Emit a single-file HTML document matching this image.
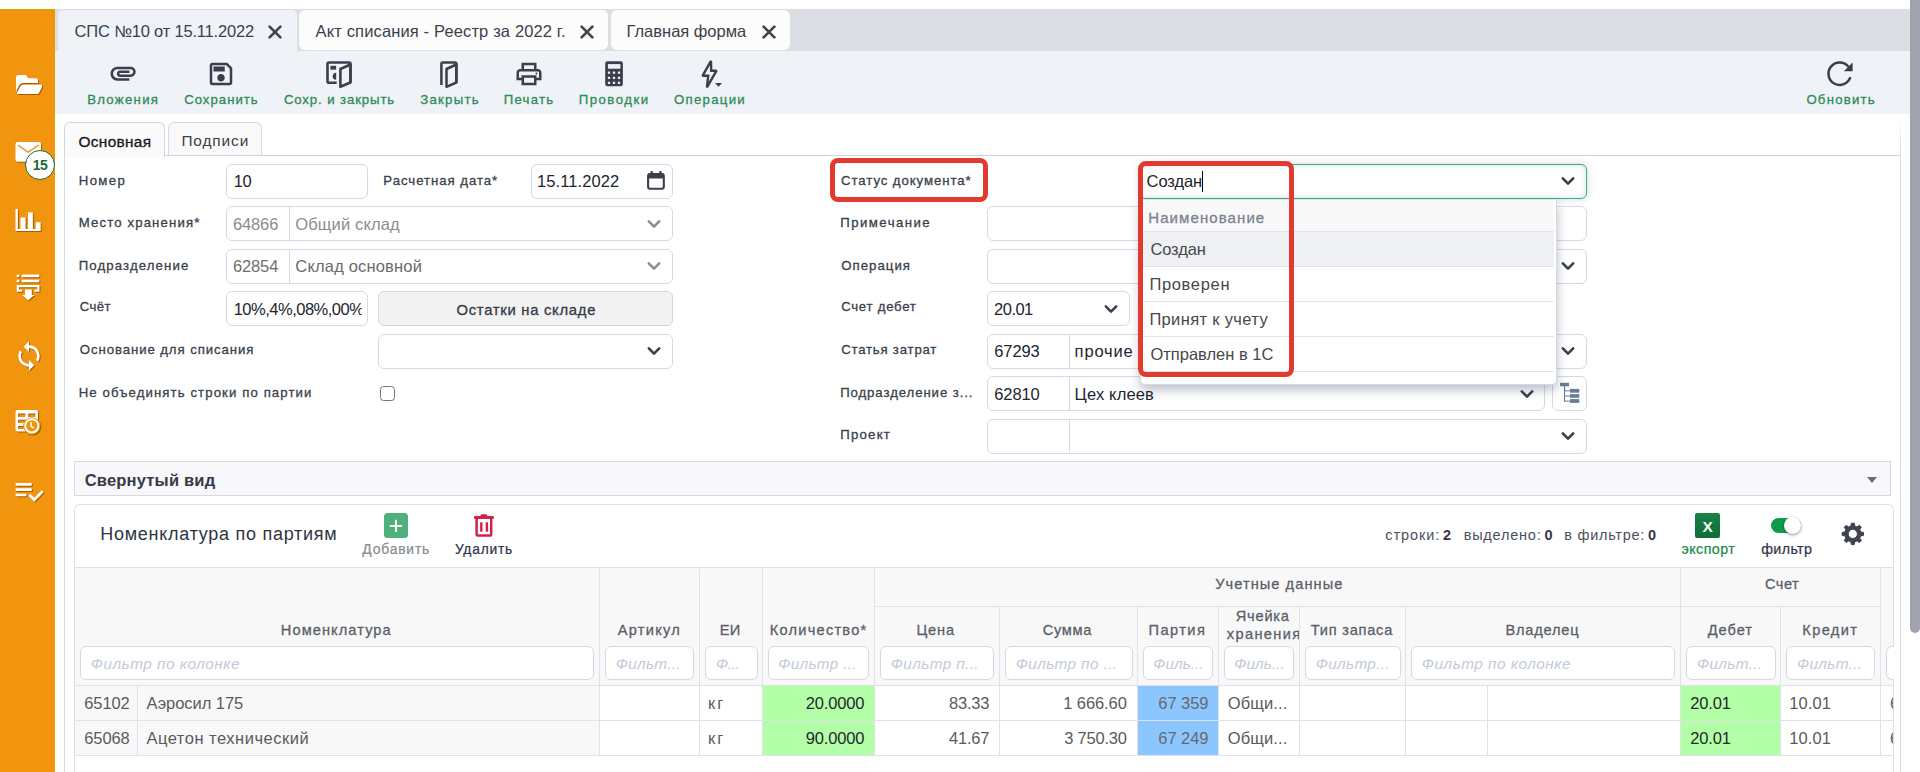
<!DOCTYPE html>
<html lang="ru">
<head>
<meta charset="utf-8">
<title>СПС №10 от 15.11.2022</title>
<style>
*{box-sizing:border-box;margin:0;padding:0}
html,body{width:1920px;height:772px;overflow:hidden;background:#fff}
body{font-family:"Liberation Sans",sans-serif;color:#343a40;position:relative;font-size:14px}
.a{position:absolute}
.t{position:absolute;white-space:nowrap}
.inp{position:absolute;height:35px;border:1px solid #d7d8e6;border-radius:6px;background:#fff}
.dv{position:absolute;width:1px;background:#d7d8e6}
.hl{position:absolute;height:1px;background:#e1e1ea}
.vl{position:absolute;width:1px;background:#e1e1ea}
.fi{position:absolute;top:646px;height:34px;border:1px solid #d7d8e6;border-radius:6px;background:#fff}
</style>
</head>
<body>
<div class="a" style="left:0px;top:9px;width:55px;height:763px;background:#f0950d"></div>
<div class="a" style="left:55px;top:9px;width:1855px;height:42px;background:#dbdee3"></div>
<div class="a" style="left:55px;top:51px;width:1855px;height:63px;background:#eff2f7"></div>
<div class="a" style="left:1910px;top:0px;width:10px;height:633px;background:#a0a2ae;border-radius:0 0 5px 5px"></div>
<div class="a" style="left:58px;top:10px;width:239px;height:41px;background:#eff2f7;border-radius:5px 5px 0 0"></div>
<div class="a" style="left:299px;top:10px;width:309px;height:40px;background:#fcfcfd;border-radius:6px"></div>
<div class="a" style="left:611px;top:10px;width:179px;height:40px;background:#fcfcfd;border-radius:6px"></div>
<div class="a" style="left:64px;top:155px;width:1837px;height:620px;border:1px solid #d6dae7;border-top-color:#c9d3e3;border-bottom:none"></div>
<div class="a" style="left:64px;top:122px;width:101px;height:35px;border:1px solid #cdd5e3;border-bottom:none;border-radius:6px 6px 0 0;background:#fafafb"></div>
<div class="a" style="left:168px;top:122px;width:94px;height:33px;border:1px solid #d6dae8;border-bottom:none;border-radius:6px 6px 0 0;background:#f9f9fa"></div>
<div class="a" style="left:1900px;top:118px;width:1px;height:37px;background:linear-gradient(rgba(214,218,231,0),#d6dae7)"></div>
<div class="inp" style="left:226px;top:164px;width:142px;"></div>
<div class="inp" style="left:531px;top:164px;width:142px;"></div>
<div class="inp" style="left:226px;top:206px;width:447px;"></div>
<div class="dv" style="left:289px;top:207px;height:33px"></div>
<div class="inp" style="left:226px;top:249px;width:447px;"></div>
<div class="dv" style="left:289px;top:250px;height:33px"></div>
<div class="inp" style="left:226px;top:291px;width:142px;overflow:hidden"></div>
<div class="inp" style="left:378px;top:291px;width:295px;background:#f2f2f3;border-color:#d4d4dc"></div>
<div class="inp" style="left:378px;top:334px;width:295px;"></div>
<div class="a" style="left:380px;top:385.6px;width:15px;height:15px;border:1.3px solid #767676;border-radius:3.5px;background:#fff"></div>
<div class="inp" style="left:1139px;top:164px;width:448px;border-color:#3cb371;box-shadow:0 0 7px rgba(110,130,190,.35),inset 0 0 6px rgba(120,140,195,.28)"></div>
<div class="a" style="left:1202px;top:170.5px;width:1px;height:21.5px;background:#000"></div>
<div class="inp" style="left:987px;top:206px;width:600px;"></div>
<div class="inp" style="left:987px;top:249px;width:600px;"></div>
<div class="inp" style="left:987px;top:291px;width:143px;"></div>
<div class="inp" style="left:987px;top:334px;width:600px;"></div>
<div class="dv" style="left:1069px;top:335px;height:33px"></div>
<div class="inp" style="left:987px;top:376px;width:558px;"></div>
<div class="dv" style="left:1069px;top:377px;height:33px"></div>
<div class="inp" style="left:1552px;top:376px;width:35px;"></div>
<div class="inp" style="left:987px;top:419px;width:600px;"></div>
<div class="dv" style="left:1069px;top:420px;height:33px"></div>
<div class="a" style="left:74px;top:461px;width:1817px;height:35px;background:#f8f8fa;border:1px solid #d6d8e6"></div>
<div class="a" style="left:1866.8px;top:476.5px;width:0px;height:0px;border-left:5.85px solid transparent;border-right:5.85px solid transparent;border-top:6.4px solid #6b6e75"></div>
<div class="a" style="left:74px;top:504px;width:1820px;height:280px;border:1px solid #dcdfea;border-radius:6px;background:#fff"></div>
<div class="a" style="left:75px;top:568px;width:1818px;height:118px;background:#f8f8f9"></div>
<div class="a" style="left:75px;top:686px;width:524px;height:70px;background:#f8f8f9"></div>
<div class="hl" style="left:75px;top:567px;width:1818px"></div><div class="hl" style="left:75px;top:685px;width:1818px"></div><div class="hl" style="left:874px;top:606px;width:1007px"></div><div class="hl" style="left:75px;top:720px;width:1818px"></div><div class="hl" style="left:75px;top:755px;width:1818px"></div>
<div class="a" style="left:763px;top:686px;width:111px;height:34px;background:#b3ffa8"></div>
<div class="a" style="left:1138px;top:686px;width:80px;height:34px;background:#8cc6ff"></div>
<div class="a" style="left:1681px;top:686px;width:99px;height:34px;background:#b3ffa8"></div>
<div class="a" style="left:763px;top:721px;width:111px;height:34px;background:#b3ffa8"></div>
<div class="a" style="left:1138px;top:721px;width:80px;height:34px;background:#8cc6ff"></div>
<div class="a" style="left:1681px;top:721px;width:99px;height:34px;background:#b3ffa8"></div>
<div class="vl" style="left:599px;top:569px;height:187px"></div>
<div class="vl" style="left:699px;top:569px;height:187px"></div>
<div class="vl" style="left:762px;top:569px;height:187px"></div>
<div class="vl" style="left:874px;top:569px;height:187px"></div>
<div class="vl" style="left:1680px;top:569px;height:187px"></div>
<div class="vl" style="left:1880px;top:569px;height:187px"></div>
<div class="vl" style="left:999px;top:607px;height:149px"></div>
<div class="vl" style="left:1137px;top:607px;height:149px"></div>
<div class="vl" style="left:1218px;top:607px;height:149px"></div>
<div class="vl" style="left:1299px;top:607px;height:149px"></div>
<div class="vl" style="left:1405px;top:607px;height:149px"></div>
<div class="vl" style="left:1780px;top:607px;height:149px"></div>
<div class="vl" style="left:137px;top:686px;height:70px"></div><div class="vl" style="left:1487px;top:686px;height:70px"></div>
<div class="a" style="left:1219px;top:625px;width:80px;height:20px;overflow:hidden"></div>
<div class="fi" style="left:80.3px;width:514px"></div>
<div class="fi" style="left:605px;width:89.3px"></div>
<div class="fi" style="left:705px;width:52.7px"></div>
<div class="fi" style="left:768.2px;width:101.1px"></div>
<div class="fi" style="left:880px;width:114.3px"></div>
<div class="fi" style="left:1005px;width:127.7px"></div>
<div class="fi" style="left:1143.3px;width:70px"></div>
<div class="fi" style="left:1224px;width:70.3px"></div>
<div class="fi" style="left:1305px;width:95.7px"></div>
<div class="fi" style="left:1411.2px;width:264.2px"></div>
<div class="fi" style="left:1686px;width:89.6px"></div>
<div class="fi" style="left:1786.2px;width:89.2px"></div>
<div class="fi" style="left:1886.3px;border-right:none;border-radius:6px 0 0 6px;width:8px"></div>
<svg class="a" style="left:15.5px;top:74.6px;filter:drop-shadow(1px 1px .6px rgba(140,70,0,.75))" width="26.6" height="19.4" viewBox="0 64 576 384" preserveAspectRatio="none"><path fill="#fff" d="M572.694 292.093L500.27 416.248A63.997 63.997 0 0 1 444.989 448H45.025c-18.523 0-30.064-20.093-20.731-36.093l72.424-124.155A64 64 0 0 1 152 256h399.964c18.523 0 30.064 20.093 20.73 36.093zM152 224h328v-48c0-26.51-21.49-48-48-48H272l-64-64H48C21.49 64 0 85.49 0 112v278.046l69.077-118.418C86.214 242.25 117.989 224 152 224z"/></svg>
<svg class="a" style="left:12px;top:138px;filter:drop-shadow(1px 1px .6px rgba(140,70,0,.75))" width="34" height="28" viewBox="12 138 34 28"><rect x="15.5" y="142" width="25.6" height="19.8" rx="2.2" fill="#fff"/><path d="M17.9 145.1L28.2 152L38.6 145.1" fill="none" stroke="#e39a3a" stroke-width="1.5"/></svg>
<div class="a" style="left:25px;top:150px;width:30px;height:30px;border-radius:50%;background:#fff;border:1.5px solid #1d6b1f"></div>
<svg class="a" style="left:12px;top:204px;filter:drop-shadow(1px 1px .6px rgba(140,70,0,.75))" width="34" height="32" viewBox="12 204 34 32"><path fill="#fff" d="M15.5 209h2.4v20h2.6v-11.5h5.1V229h2.4v-16.5h4.9V229h2.9v-6.7h4.9v8.7H15.5z"/></svg>
<svg class="a" style="left:12px;top:270px;filter:drop-shadow(1px 1px .6px rgba(140,70,0,.75))" width="34" height="36" viewBox="12 270 34 36"><g fill="#fff"><rect x="16.7" y="274.6" width="2.7" height="2.6"/><rect x="21.7" y="274.6" width="17.6" height="2.6"/><rect x="16.7" y="279.7" width="2.7" height="2.6"/><rect x="21.7" y="279.7" width="17.6" height="2.6"/><path d="M16.7 284.9h22.8v6.8h-5v-2.2h2.7v-2.3H19v2.3h3.2v2.2h-5.5z"/><path d="M25 289.5h6.8v5.5h2.6l-6.1 5.2-6.1-5.2H25z"/></g></svg>
<svg class="a" style="left:12.5px;top:340px;filter:drop-shadow(1px 1px .6px rgba(140,70,0,.75))" width="32" height="32" viewBox="0 0 24 24"><path fill="#fff" d="M12 4V1L8 5l4 4V6c3.31 0 6 2.69 6 6 0 1.01-.25 1.97-.7 2.8l1.46 1.46C19.54 15.03 20 13.57 20 12c0-4.42-3.58-8-8-8zm0 14c-3.31 0-6-2.69-6-6 0-1.01.25-1.97.7-2.8L5.24 7.74C4.46 8.97 4 10.43 4 12c0 4.42 3.58 8 8 8v3l4-4-4-4v3z"/></svg>
<svg class="a" style="left:12px;top:405px;filter:drop-shadow(1px 1px .6px rgba(140,70,0,.75))" width="34" height="34" viewBox="12 405 34 34"><g><path fill="#fff" fill-rule="evenodd" d="M17.5 409.9h18.5a2 2 0 0 1 2 2v17.7a2 2 0 0 1-2 2H17.5a2 2 0 0 1-2-2v-17.7a2 2 0 0 1 2-2zM18.2 413.4h7.2v3.5h-7.2zM28.3 413.4h7.2v3.5h-7.2zM18.2 419.8h7.2v3.3h-7.2zM18.2 426h7.2v3h-7.2z"/><circle cx="31.8" cy="425.8" r="8.6" fill="#f0950d"/><circle cx="31.8" cy="425.8" r="6.6" fill="none" stroke="#fff" stroke-width="2"/><path d="M31 422v4.2l2.8 2" fill="none" stroke="#fff" stroke-width="1.5"/></g></svg>
<svg class="a" style="left:12.8px;top:474.7px;filter:drop-shadow(1px 1px .6px rgba(140,70,0,.75))" width="32" height="32" viewBox="0 0 24 24"><path fill="#fff" d="M14 10H2v2h12v-2zm0-4H2v2h12V6zM2 16h8v-2H2v2zm19.5-4.5L23 13l-6.99 7-4.51-4.5L13 14l3.01 3 5.49-5.5z"/></svg>
<svg class="a" style="left:107.9px;top:57.5px;" width="30.24" height="30.24" viewBox="0 0 24 24"><path fill="#3b3f4c" d="M2 12.5C2 9.46 4.46 7 7.5 7H18c2.21 0 4 1.79 4 4s-1.79 4-4 4H9.5C8.12 15 7 13.88 7 12.5S8.12 10 9.5 10H17v2H9.41c-.55 0-.55 1 0 1H18c1.1 0 2-.9 2-2s-.9-2-2-2H7.5C5.57 9 4 10.57 4 12.5S5.57 16 7.5 16H17v2H7.5C4.46 18 2 15.54 2 12.5z"/></svg>
<svg class="a" style="left:206.1px;top:59.1px;" width="30" height="30" viewBox="0 0 24 24"><path fill="#3b3f4c" d="M17 3H5c-1.11 0-2 .9-2 2v14c0 1.1.89 2 2 2h14c1.1 0 2-.9 2-2V7l-4-4zm2 16H5V5h11.17L19 7.83V19zm-7-7c-1.66 0-3 1.34-3 3s1.34 3 3 3 3-1.34 3-3-1.34-3-3-3zM6 6h9v4H6z"/></svg>
<svg class="a" style="left:322px;top:56px;" width="36" height="36" viewBox="322 56 36 36"><g fill="none" stroke="#3b3f4c" stroke-width="2.6" stroke-linejoin="round"><path d="M336.7 82.8H329a1.5 1.5 0 0 1-1.5-1.5V64a1.5 1.5 0 0 1 1.5-1.5h20a1.5 1.5 0 0 1 1.5 1.5V82.6"/><path d="M340.4 69l10-4.5v18l-10 4.3z"/></g><rect x="330.4" y="65.8" width="5.7" height="3.9" fill="#3b3f4c"/><path d="M336.2 72.8a3.5 3.5 0 0 0 0 7z" fill="#3b3f4c"/></svg>
<svg class="a" style="left:434px;top:56px;" width="30" height="36" viewBox="434 56 30 36"><g fill="none" stroke="#3b3f4c" stroke-width="2.5" stroke-linejoin="round"><path d="M441.4 85V64a1.5 1.5 0 0 1 1.5-1.5h12a1.5 1.5 0 0 1 1.5 1.5V82.6"/><path d="M446.5 69l9.8-4.5v18l-9.8 4.3z"/></g></svg>
<svg class="a" style="left:513.75px;top:59px;" width="30" height="30" viewBox="0 0 24 24"><path fill="#3b3f4c" d="M19 8h-1V3H6v5H5c-1.66 0-3 1.34-3 3v6h4v4h12v-4h4v-6c0-1.66-1.34-3-3-3zM8 5h8v3H8V5zm8 12v2H8v-4h8v2zm2-2v-2H6v2H4v-4c0-.55.45-1 1-1h14c.55 0 1 .45 1 1v4h-2z"/><circle cx="18" cy="11.5" r=".8" fill="#3b3f4c"/></svg>
<svg class="a" style="left:603px;top:59px;" width="24" height="30" viewBox="603 59 24 30"><rect x="605.2" y="61.3" width="17.7" height="25" rx="2.2" fill="#3b3f4c"/><rect x="607.9" y="64.1" width="12.5" height="4.6" fill="#eff2f7"/><rect x="607.85" y="71.55" width="2.3" height="2.3" rx=".4" fill="#eff2f7"/><rect x="607.85" y="76.64999999999999" width="2.3" height="2.3" rx=".4" fill="#eff2f7"/><rect x="607.85" y="81.64999999999999" width="2.3" height="2.3" rx=".4" fill="#eff2f7"/><rect x="612.85" y="71.55" width="2.3" height="2.3" rx=".4" fill="#eff2f7"/><rect x="612.85" y="76.64999999999999" width="2.3" height="2.3" rx=".4" fill="#eff2f7"/><rect x="612.85" y="81.64999999999999" width="2.3" height="2.3" rx=".4" fill="#eff2f7"/><rect x="617.85" y="71.55" width="2.3" height="2.3" rx=".4" fill="#eff2f7"/><rect x="617.85" y="76.64999999999999" width="2.3" height="2.3" rx=".4" fill="#eff2f7"/><rect x="617.85" y="81.64999999999999" width="2.3" height="2.3" rx=".4" fill="#eff2f7"/></svg>
<svg class="a" style="left:698px;top:56px;" width="28" height="36" viewBox="698 56 28 36"><path d="M711 60.9L702.5 75.8H708.2L706.9 87.3L716.6 70.7H711.2Z" fill="none" stroke="#3b3f4c" stroke-width="2.4" stroke-linejoin="miter" stroke-miterlimit="1.6"/><path d="M715 83h7l-3.5 3.8z" fill="#3b3f4c"/></svg>
<svg class="a" style="left:1824px;top:58px;" width="34" height="32" viewBox="1824 58 34 32"><path d="M1848.53 66.85A11.2 11.2 0 1 0 1850.35 77.21" fill="none" stroke="#3b3f4c" stroke-width="2.5"/><path d="M1852.6 62.6V71.2H1843.8z" fill="#3b3f4c"/></svg>
<svg class="a" style="left:267.4px;top:24.3px;" width="16" height="16" viewBox="-8 -8 16 16"><path d="M-5.4 -5.4L5.4 5.4M5.4 -5.4L-5.4 5.4" stroke="#3f444f" stroke-width="2.7" stroke-linecap="round"/></svg>
<svg class="a" style="left:578.5px;top:24.3px;" width="16" height="16" viewBox="-8 -8 16 16"><path d="M-5.4 -5.4L5.4 5.4M5.4 -5.4L-5.4 5.4" stroke="#3f444f" stroke-width="2.7" stroke-linecap="round"/></svg>
<svg class="a" style="left:760.5px;top:24.3px;" width="16" height="16" viewBox="-8 -8 16 16"><path d="M-5.4 -5.4L5.4 5.4M5.4 -5.4L-5.4 5.4" stroke="#3f444f" stroke-width="2.7" stroke-linecap="round"/></svg>
<svg class="a" style="left:646px;top:217.8px;" width="16" height="12" viewBox="-8 -6 16 12"><path d="M-5.2 -2.6L0 2.6L5.2 -2.6" fill="none" stroke="#8a8d96" stroke-width="2.6" stroke-linecap="round" stroke-linejoin="round"/></svg>
<svg class="a" style="left:646px;top:260.2px;" width="16" height="12" viewBox="-8 -6 16 12"><path d="M-5.2 -2.6L0 2.6L5.2 -2.6" fill="none" stroke="#8a8d96" stroke-width="2.6" stroke-linecap="round" stroke-linejoin="round"/></svg>
<svg class="a" style="left:646px;top:345.2px;" width="16" height="12" viewBox="-8 -6 16 12"><path d="M-5.2 -2.6L0 2.6L5.2 -2.6" fill="none" stroke="#3b3f4c" stroke-width="2.6" stroke-linecap="round" stroke-linejoin="round"/></svg>
<svg class="a" style="left:1560px;top:175.3px;" width="16" height="12" viewBox="-8 -6 16 12"><path d="M-5.2 -2.6L0 2.6L5.2 -2.6" fill="none" stroke="#3b3f4c" stroke-width="2.6" stroke-linecap="round" stroke-linejoin="round"/></svg>
<svg class="a" style="left:1560px;top:260.2px;" width="16" height="12" viewBox="-8 -6 16 12"><path d="M-5.2 -2.6L0 2.6L5.2 -2.6" fill="none" stroke="#3b3f4c" stroke-width="2.6" stroke-linecap="round" stroke-linejoin="round"/></svg>
<svg class="a" style="left:1103.1px;top:303px;" width="16" height="12" viewBox="-8 -6 16 12"><path d="M-5.2 -2.6L0 2.6L5.2 -2.6" fill="none" stroke="#3b3f4c" stroke-width="2.6" stroke-linecap="round" stroke-linejoin="round"/></svg>
<svg class="a" style="left:1560px;top:345.2px;" width="16" height="12" viewBox="-8 -6 16 12"><path d="M-5.2 -2.6L0 2.6L5.2 -2.6" fill="none" stroke="#3b3f4c" stroke-width="2.6" stroke-linecap="round" stroke-linejoin="round"/></svg>
<svg class="a" style="left:1519px;top:388px;" width="16" height="12" viewBox="-8 -6 16 12"><path d="M-5.2 -2.6L0 2.6L5.2 -2.6" fill="none" stroke="#3b3f4c" stroke-width="2.6" stroke-linecap="round" stroke-linejoin="round"/></svg>
<svg class="a" style="left:1560px;top:430px;" width="16" height="12" viewBox="-8 -6 16 12"><path d="M-5.2 -2.6L0 2.6L5.2 -2.6" fill="none" stroke="#3b3f4c" stroke-width="2.6" stroke-linecap="round" stroke-linejoin="round"/></svg>
<svg class="a" style="left:645px;top:169px;" width="22" height="23" viewBox="645 169 22 23"><rect x="648.1" y="174" width="15.7" height="14.7" rx="2" fill="none" stroke="#3b3f4c" stroke-width="2.1"/><rect x="648" y="173.2" width="15.9" height="5.2" rx="1.5" fill="#3b3f4c"/><rect x="650.6" y="171" width="2.2" height="4" rx=".6" fill="#3b3f4c"/><rect x="659.3" y="171" width="2.2" height="4" rx=".6" fill="#3b3f4c"/></svg>
<svg class="a" style="left:1558px;top:380px;" width="24" height="26" viewBox="1558 380 24 26"><g fill="#6b7d95"><rect x="1560" y="382.8" width="9" height="3.5"/><rect x="1563.9" y="386" width="1.2" height="15.6"/><rect x="1570" y="388.9" width="9.3" height="3.8"/><rect x="1570" y="394.1" width="9.3" height="3.7"/><rect x="1570" y="399.1" width="9.3" height="3.8"/><rect x="1564" y="390.3" width="6" height="1"/><rect x="1564" y="395.5" width="6" height="1"/><rect x="1564" y="400.6" width="6" height="1"/></g></svg>
<div class="a" style="left:383.6px;top:513.4px;width:24.8px;height:24.9px;border-radius:3.5px;background:#4fb07d"></div>
<svg class="a" style="left:386px;top:516px;" width="20" height="20" viewBox="386 516 20 20"><path d="M389.8 525.9h12.3M395.95 519.8v12.3" stroke="#f1fff6" stroke-width="2"/></svg>
<svg class="a" style="left:470px;top:512px;" width="28" height="28" viewBox="470 512 28 28"><rect x="473.9" y="516" width="20" height="3" rx="1.2" fill="#d5204a"/><rect x="480.6" y="514.3" width="6.6" height="2.4" rx="1" fill="#d5204a"/><path d="M476.6 519v15.4a1.2 1.2 0 0 0 1.2 1.2h12.2a1.2 1.2 0 0 0 1.2 -1.2V519" fill="none" stroke="#d5204a" stroke-width="2.5"/><rect x="480.1" y="522.3" width="2.4" height="9.4" fill="#d5204a"/><rect x="485.7" y="522.3" width="2.4" height="9.4" fill="#d5204a"/></svg>
<div class="a" style="left:1695.4px;top:513.3px;width:25px;height:25px;border-radius:2px;background:linear-gradient(#1a8248,#0f6c38)"></div>
<div class="a" style="left:1770.8px;top:518.2px;width:30px;height:15px;border-radius:7.5px;background:linear-gradient(90deg,#0f9a4c 45%,#8fd0a8)"></div>
<div class="a" style="left:1783.9px;top:516.9px;width:17.2px;height:17.2px;border-radius:50%;background:#fff;box-shadow:0 1px 3px rgba(0,0,0,.45)"></div>
<svg class="a" style="left:1838px;top:519px;" width="30" height="30" viewBox="1838 519 30 30"><path fill-rule="evenodd" fill="#3f4350" stroke="#3f4350" stroke-width="1" stroke-linejoin="round" d="M1860.77 531.99L1863.50 532.46L1863.50 535.34L1860.77 535.81L1859.79 538.18L1861.39 540.45L1859.35 542.49L1857.08 540.89L1854.71 541.87L1854.24 544.60L1851.36 544.60L1850.89 541.87L1848.52 540.89L1846.25 542.49L1844.21 540.45L1845.81 538.18L1844.83 535.81L1842.10 535.34L1842.10 532.46L1844.83 531.99L1845.81 529.62L1844.21 527.35L1846.25 525.31L1848.52 526.91L1850.89 525.93L1851.36 523.20L1854.24 523.20L1854.71 525.93L1857.08 526.91L1859.35 525.31L1861.39 527.35L1859.79 529.62ZM1857.3999999999999 533.9A4.6 4.6 0 1 0 1848.2 533.9A4.6 4.6 0 1 0 1857.3999999999999 533.9Z"/></svg>

<div class="t" style="left:74.60px;top:22.50px;font-size:16.5px;line-height:17px;color:#3a3f4b;letter-spacing:-0.182px;">СПС №10 от 15.11.2022</div>
<div class="t" style="left:315.60px;top:22.50px;font-size:16.5px;line-height:17px;color:#3a3f4b;letter-spacing:0.138px;">Акт списания - Реестр за 2022 г.</div>
<div class="t" style="left:626.50px;top:22.50px;font-size:16.5px;line-height:17px;color:#3a3f4b;letter-spacing:-0.013px;">Главная форма</div>
<div class="t" style="left:87.15px;top:92.50px;font-size:13.2px;line-height:14px;color:#2e8b57;letter-spacing:1.296px;-webkit-text-stroke:0.3px;">Вложения</div>
<div class="t" style="left:184.15px;top:92.50px;font-size:13.2px;line-height:14px;color:#2e8b57;letter-spacing:1.005px;-webkit-text-stroke:0.3px;">Сохранить</div>
<div class="t" style="left:283.88px;top:92.50px;font-size:13.2px;line-height:14px;color:#2e8b57;letter-spacing:0.889px;-webkit-text-stroke:0.3px;">Сохр. и закрыть</div>
<div class="t" style="left:420.15px;top:92.50px;font-size:13.2px;line-height:14px;color:#2e8b57;letter-spacing:1.296px;-webkit-text-stroke:0.3px;">Закрыть</div>
<div class="t" style="left:503.65px;top:92.50px;font-size:13.2px;line-height:14px;color:#2e8b57;letter-spacing:1.274px;-webkit-text-stroke:0.3px;">Печать</div>
<div class="t" style="left:578.65px;top:92.50px;font-size:13.2px;line-height:14px;color:#2e8b57;letter-spacing:1.527px;-webkit-text-stroke:0.3px;">Проводки</div>
<div class="t" style="left:673.88px;top:92.50px;font-size:13.2px;line-height:14px;color:#2e8b57;letter-spacing:1.304px;-webkit-text-stroke:0.3px;">Операции</div>
<div class="t" style="left:1806.38px;top:92.50px;font-size:13.2px;line-height:14px;color:#2e8b57;letter-spacing:1.230px;-webkit-text-stroke:0.3px;">Обновить</div>
<div class="t" style="left:78.55px;top:133.50px;font-size:15.4px;line-height:16px;color:#17191d;letter-spacing:0.320px;-webkit-text-stroke:0.3px;">Основная</div>
<div class="t" style="left:181.40px;top:132.50px;font-size:15.4px;line-height:16px;color:#3b4048;letter-spacing:0.902px;">Подписи</div>
<div class="t" style="left:78.75px;top:173.50px;font-size:13.2px;line-height:14px;color:#3a3f4a;letter-spacing:1.360px;-webkit-text-stroke:0.3px;">Номер</div>
<div class="t" style="left:233.70px;top:172.50px;font-size:16.5px;line-height:17px;color:#22252e;letter-spacing:-0.377px;">10</div>
<div class="t" style="left:383.35px;top:173.50px;font-size:13.2px;line-height:14px;color:#3a3f4a;letter-spacing:0.955px;-webkit-text-stroke:0.3px;">Расчетная дата*</div>
<div class="t" style="left:537.00px;top:172.50px;font-size:16.5px;line-height:17px;color:#22252e;letter-spacing:0.091px;">15.11.2022</div>
<div class="t" style="left:78.75px;top:215.50px;font-size:13.2px;line-height:14px;color:#3a3f4a;letter-spacing:1.127px;-webkit-text-stroke:0.3px;">Место хранения*</div>
<div class="t" style="left:232.90px;top:215.50px;font-size:16.5px;line-height:17px;color:#8d8d8d;letter-spacing:-0.102px;">64866</div>
<div class="t" style="left:295.30px;top:215.50px;font-size:16.5px;line-height:17px;color:#8d8d8d;letter-spacing:0.136px;">Общий склад</div>
<div class="t" style="left:78.75px;top:258.50px;font-size:13.2px;line-height:14px;color:#3a3f4a;letter-spacing:1.120px;-webkit-text-stroke:0.3px;">Подразделение</div>
<div class="t" style="left:232.90px;top:257.50px;font-size:16.5px;line-height:17px;color:#6e6e6e;letter-spacing:-0.102px;">62854</div>
<div class="t" style="left:295.30px;top:257.50px;font-size:16.5px;line-height:17px;color:#6a6a6a;letter-spacing:0.177px;">Склад основной</div>
<div class="t" style="left:79.75px;top:299.50px;font-size:13.2px;line-height:14px;color:#3a3f4a;letter-spacing:0.407px;-webkit-text-stroke:0.3px;">Счёт</div>
<div class="t" style="left:456.45px;top:302.50px;font-size:14.8px;line-height:15px;color:#343a46;letter-spacing:0.725px;-webkit-text-stroke:0.3px;">Остатки на складе</div>
<div class="t" style="left:79.75px;top:342.50px;font-size:13.2px;line-height:14px;color:#3a3f4a;letter-spacing:0.920px;-webkit-text-stroke:0.3px;">Основание для списания</div>
<div class="t" style="left:78.75px;top:385.50px;font-size:13.2px;line-height:14px;color:#3a3f4a;letter-spacing:1.097px;-webkit-text-stroke:0.3px;">Не объединять строки по партии</div>
<div class="t" style="left:841.05px;top:173.50px;font-size:13.2px;line-height:14px;color:#3a3f4a;letter-spacing:0.922px;-webkit-text-stroke:0.3px;">Статус документа*</div>
<div class="t" style="left:1146.60px;top:172.50px;font-size:16.5px;line-height:17px;color:#22252e;letter-spacing:-0.103px;">Создан</div>
<div class="t" style="left:840.35px;top:215.50px;font-size:13.2px;line-height:14px;color:#3a3f4a;letter-spacing:1.445px;-webkit-text-stroke:0.3px;">Примечание</div>
<div class="t" style="left:841.15px;top:258.50px;font-size:13.2px;line-height:14px;color:#3a3f4a;letter-spacing:1.054px;-webkit-text-stroke:0.3px;">Операция</div>
<div class="t" style="left:841.15px;top:299.50px;font-size:13.2px;line-height:14px;color:#3a3f4a;letter-spacing:0.741px;-webkit-text-stroke:0.3px;">Счет дебет</div>
<div class="t" style="left:994.10px;top:300.50px;font-size:16.5px;line-height:17px;color:#22252e;letter-spacing:-0.528px;">20.01</div>
<div class="t" style="left:841.15px;top:342.50px;font-size:13.2px;line-height:14px;color:#3a3f4a;letter-spacing:0.793px;-webkit-text-stroke:0.3px;">Статья затрат</div>
<div class="t" style="left:994.30px;top:342.50px;font-size:16.5px;line-height:17px;color:#22252e;letter-spacing:-0.102px;">67293</div>
<div class="t" style="left:1074.60px;top:342.50px;font-size:16.5px;line-height:17px;color:#22252e;letter-spacing:0.852px;">прочие</div>
<div class="t" style="left:840.15px;top:385.50px;font-size:13.2px;line-height:14px;color:#3a3f4a;letter-spacing:0.916px;-webkit-text-stroke:0.3px;">Подразделение з...</div>
<div class="t" style="left:994.30px;top:385.50px;font-size:16.5px;line-height:17px;color:#22252e;letter-spacing:-0.102px;">62810</div>
<div class="t" style="left:1074.60px;top:385.50px;font-size:16.5px;line-height:17px;color:#22252e;letter-spacing:0.158px;">Цех клеев</div>
<div class="t" style="left:840.15px;top:427.50px;font-size:13.2px;line-height:14px;color:#3a3f4a;letter-spacing:1.260px;-webkit-text-stroke:0.3px;">Проект</div>
<div class="t" style="left:84.70px;top:471.50px;font-size:16.5px;line-height:17px;color:#343a46;letter-spacing:0.198px;font-weight:bold;">Свернутый вид</div>
<div class="t" style="left:100.30px;top:525.00px;font-size:18px;line-height:18px;color:#2e3442;letter-spacing:0.728px;">Номенклатура по партиям</div>
<div class="t" style="left:362.32px;top:542.50px;font-size:13.8px;line-height:14px;color:#888b92;letter-spacing:0.853px;-webkit-text-stroke:0.24px;">Добавить</div>
<div class="t" style="left:454.92px;top:542.50px;font-size:13.8px;line-height:14px;color:#30364a;letter-spacing:0.779px;-webkit-text-stroke:0.24px;">Удалить</div>
<div class="t" style="left:1385.30px;top:527.50px;font-size:14.5px;line-height:15px;color:#4a4f5c;letter-spacing:0.923px;">строки:</div>
<div class="t" style="left:1443.00px;top:527.50px;font-size:14.5px;line-height:15px;color:#343848;font-weight:bold;">2</div>
<div class="t" style="left:1463.70px;top:527.50px;font-size:14.5px;line-height:15px;color:#4a4f5c;letter-spacing:0.779px;">выделено:</div>
<div class="t" style="left:1544.50px;top:527.50px;font-size:14.5px;line-height:15px;color:#343848;font-weight:bold;">0</div>
<div class="t" style="left:1564.30px;top:527.50px;font-size:14.5px;line-height:15px;color:#4a4f5c;letter-spacing:0.732px;">в фильтре:</div>
<div class="t" style="left:1648.00px;top:527.50px;font-size:14.5px;line-height:15px;color:#343848;font-weight:bold;">0</div>
<div class="t" style="left:1681.62px;top:541.50px;font-size:14.3px;line-height:15px;color:#1c8a4e;letter-spacing:0.395px;-webkit-text-stroke:0.24px;">экспорт</div>
<div class="t" style="left:1761.22px;top:541.50px;font-size:14.3px;line-height:15px;color:#30364a;letter-spacing:0.358px;-webkit-text-stroke:0.24px;">фильтр</div>
<div class="t" style="left:280.85px;top:622.50px;font-size:14.6px;line-height:15px;color:#5a5f68;letter-spacing:1.080px;-webkit-text-stroke:0.3px;">Номенклатура</div>
<div class="t" style="left:617.85px;top:622.50px;font-size:14.6px;line-height:15px;color:#5a5f68;letter-spacing:1.235px;-webkit-text-stroke:0.3px;">Артикул</div>
<div class="t" style="left:719.80px;top:622.50px;font-size:14.6px;line-height:15px;color:#5a5f68;letter-spacing:0.266px;-webkit-text-stroke:0.3px;">ЕИ</div>
<div class="t" style="left:769.85px;top:622.50px;font-size:14.6px;line-height:15px;color:#5a5f68;letter-spacing:1.233px;-webkit-text-stroke:0.3px;">Количество*</div>
<div class="t" style="left:1215.20px;top:576.50px;font-size:14.6px;line-height:15px;color:#5a5f68;letter-spacing:1.065px;-webkit-text-stroke:0.3px;">Учетные данные</div>
<div class="t" style="left:916.50px;top:622.50px;font-size:14.6px;line-height:15px;color:#5a5f68;letter-spacing:0.810px;-webkit-text-stroke:0.3px;">Цена</div>
<div class="t" style="left:1042.85px;top:622.50px;font-size:14.6px;line-height:15px;color:#5a5f68;letter-spacing:0.640px;-webkit-text-stroke:0.3px;">Сумма</div>
<div class="t" style="left:1148.50px;top:622.50px;font-size:14.6px;line-height:15px;color:#5a5f68;letter-spacing:1.433px;-webkit-text-stroke:0.3px;">Партия</div>
<div class="t" style="left:1235.80px;top:608.50px;font-size:14.6px;line-height:15px;color:#5a5f68;letter-spacing:0.777px;-webkit-text-stroke:0.3px;">Ячейка</div>
<div class="t" style="left:1310.85px;top:622.50px;font-size:14.6px;line-height:15px;color:#5a5f68;letter-spacing:0.755px;-webkit-text-stroke:0.3px;">Тип запаса</div>
<div class="t" style="left:1505.45px;top:622.50px;font-size:14.6px;line-height:15px;color:#5a5f68;letter-spacing:0.794px;-webkit-text-stroke:0.3px;">Владелец</div>
<div class="t" style="left:1764.90px;top:576.50px;font-size:14.6px;line-height:15px;color:#5a5f68;letter-spacing:0.530px;-webkit-text-stroke:0.3px;">Счет</div>
<div class="t" style="left:1707.70px;top:622.50px;font-size:14.6px;line-height:15px;color:#5a5f68;letter-spacing:0.984px;-webkit-text-stroke:0.3px;">Дебет</div>
<div class="t" style="left:1802.35px;top:622.50px;font-size:14.6px;line-height:15px;color:#5a5f68;letter-spacing:1.364px;-webkit-text-stroke:0.3px;">Кредит</div>
<div class="t" style="left:1226.85px;top:626.50px;font-size:14.6px;line-height:15px;color:#5a5f68;letter-spacing:1.340px;-webkit-text-stroke:0.3px;">хранения</div>
<div class="t" style="left:90.70px;top:655.50px;font-size:15.4px;line-height:16px;color:#c4c9d8;letter-spacing:0.468px;font-style:italic;">Фильтр по колонке</div>
<div class="t" style="left:615.70px;top:655.50px;font-size:15.4px;line-height:16px;color:#c4c9d8;letter-spacing:0.262px;font-style:italic;">Фильт...</div>
<div class="t" style="left:716.00px;top:655.50px;font-size:15.4px;line-height:16px;color:#c4c9d8;letter-spacing:-0.495px;font-style:italic;">Ф...</div>
<div class="t" style="left:778.30px;top:655.50px;font-size:15.4px;line-height:16px;color:#c4c9d8;letter-spacing:0.233px;font-style:italic;">Фильтр ...</div>
<div class="t" style="left:890.70px;top:655.50px;font-size:15.4px;line-height:16px;color:#c4c9d8;letter-spacing:0.353px;font-style:italic;">Фильтр п...</div>
<div class="t" style="left:1015.70px;top:655.50px;font-size:15.4px;line-height:16px;color:#c4c9d8;letter-spacing:0.341px;font-style:italic;">Фильтр по ...</div>
<div class="t" style="left:1153.30px;top:655.50px;font-size:15.4px;line-height:16px;color:#c4c9d8;letter-spacing:-0.020px;font-style:italic;">Филь...</div>
<div class="t" style="left:1234.30px;top:655.50px;font-size:15.4px;line-height:16px;color:#c4c9d8;letter-spacing:-0.020px;font-style:italic;">Филь...</div>
<div class="t" style="left:1315.70px;top:655.50px;font-size:15.4px;line-height:16px;color:#c4c9d8;letter-spacing:0.284px;font-style:italic;">Фильтр...</div>
<div class="t" style="left:1421.80px;top:655.50px;font-size:15.4px;line-height:16px;color:#c4c9d8;letter-spacing:0.461px;font-style:italic;">Фильтр по колонке</div>
<div class="t" style="left:1697.00px;top:655.50px;font-size:15.4px;line-height:16px;color:#c4c9d8;letter-spacing:0.276px;font-style:italic;">Фильт...</div>
<div class="t" style="left:1797.00px;top:655.50px;font-size:15.4px;line-height:16px;color:#c4c9d8;letter-spacing:0.276px;font-style:italic;">Фильт...</div>
<div class="t" style="left:84.30px;top:694.50px;font-size:16.5px;line-height:17px;color:#5b5b5b;letter-spacing:-0.102px;">65102</div>
<div class="t" style="left:146.40px;top:694.50px;font-size:16.5px;line-height:17px;color:#5b5b5b;letter-spacing:-0.047px;">Аэросил 175</div>
<div class="t" style="left:708.00px;top:694.50px;font-size:16.5px;line-height:17px;color:#5b5b5b;letter-spacing:1.981px;">кг</div>
<div class="t" style="left:805.70px;top:694.50px;font-size:16.5px;line-height:17px;color:#25282e;letter-spacing:-0.144px;">20.0000</div>
<div class="t" style="left:949.00px;top:694.50px;font-size:16.5px;line-height:17px;color:#5b5b5b;letter-spacing:-0.203px;">83.33</div>
<div class="t" style="left:1063.30px;top:694.50px;font-size:16.5px;line-height:17px;color:#5b5b5b;letter-spacing:-0.093px;">1 666.60</div>
<div class="t" style="left:1158.30px;top:694.50px;font-size:16.5px;line-height:17px;color:#66696f;letter-spacing:-0.058px;">67 359</div>
<div class="t" style="left:1227.70px;top:694.50px;font-size:16.5px;line-height:17px;color:#5b5b5b;letter-spacing:0.126px;">Общи...</div>
<div class="t" style="left:1690.30px;top:694.50px;font-size:16.5px;line-height:17px;color:#25282e;letter-spacing:-0.153px;">20.01</div>
<div class="t" style="left:1789.30px;top:694.50px;font-size:16.5px;line-height:17px;color:#5b5b5b;letter-spacing:0.097px;">10.01</div>
<div class="t" style="left:1890.00px;top:694.50px;font-size:16.5px;line-height:17px;color:#5b5b5b;clip-path:inset(-3px 6px -3px 0);">6</div>
<div class="t" style="left:84.30px;top:729.50px;font-size:16.5px;line-height:17px;color:#5b5b5b;letter-spacing:-0.102px;">65068</div>
<div class="t" style="left:146.40px;top:729.50px;font-size:16.5px;line-height:17px;color:#5b5b5b;letter-spacing:0.508px;">Ацетон технический</div>
<div class="t" style="left:708.00px;top:729.50px;font-size:16.5px;line-height:17px;color:#5b5b5b;letter-spacing:1.981px;">кг</div>
<div class="t" style="left:805.70px;top:729.50px;font-size:16.5px;line-height:17px;color:#25282e;letter-spacing:-0.144px;">90.0000</div>
<div class="t" style="left:949.00px;top:729.50px;font-size:16.5px;line-height:17px;color:#5b5b5b;letter-spacing:-0.203px;">41.67</div>
<div class="t" style="left:1064.30px;top:729.50px;font-size:16.5px;line-height:17px;color:#5b5b5b;letter-spacing:-0.236px;">3 750.30</div>
<div class="t" style="left:1158.30px;top:729.50px;font-size:16.5px;line-height:17px;color:#66696f;letter-spacing:-0.058px;">67 249</div>
<div class="t" style="left:1227.70px;top:729.50px;font-size:16.5px;line-height:17px;color:#5b5b5b;letter-spacing:0.126px;">Общи...</div>
<div class="t" style="left:1690.30px;top:729.50px;font-size:16.5px;line-height:17px;color:#25282e;letter-spacing:-0.153px;">20.01</div>
<div class="t" style="left:1789.30px;top:729.50px;font-size:16.5px;line-height:17px;color:#5b5b5b;letter-spacing:0.097px;">10.01</div>
<div class="t" style="left:1890.00px;top:729.50px;font-size:16.5px;line-height:17px;color:#5b5b5b;clip-path:inset(-3px 6px -3px 0);">6</div>
<div class="t" style="left:233.70px;top:300.50px;font-size:16.5px;line-height:17px;color:#22252e;letter-spacing:-0.500px;clip-path:inset(-3px calc(100% - 127.8px) -3px 0);">10%,4%,08%,00%</div>
<div class="t" style="left:32.71px;top:158.00px;font-size:14px;line-height:14px;color:#1d6b2f;letter-spacing:-0.600px;font-weight:bold;">15</div>
<div class="t" style="left:1702.60px;top:518.50px;font-size:15.5px;line-height:16px;color:#f4fff8;font-weight:bold;">X</div>
<div class="a" style="left:1140px;top:200px;width:417px;height:185px;background:#fff;border:1px solid #d6d8e2;border-top:none;border-radius:0 0 5px 5px;box-shadow:0 5px 11px rgba(50,60,85,.33)"></div>
<div class="a" style="left:1141px;top:200px;width:413px;height:32px;background:#f8f8f9;border-bottom:1px solid #e3e3ea"></div>
<div class="a" style="left:1141px;top:232px;width:413px;height:35px;background:#eff0f3;border-bottom:1px solid #e3e3ea"></div>
<div class="a" style="left:1141px;top:267px;width:413px;height:35px;border-bottom:1px solid #e3e3ea"></div>
<div class="a" style="left:1141px;top:302px;width:413px;height:35px;border-bottom:1px solid #e3e3ea"></div>
<div class="a" style="left:1141px;top:337px;width:413px;height:35px;border-bottom:1px solid #e3e3ea"></div>
<div class="a" style="left:1300px;top:624px;width:7px;height:20px;background:#f8f8f9"></div>
<div class="a" style="left:1299px;top:624px;width:1px;height:20px;background:#e1e1ea"></div>

<div class="t" style="left:1148.25px;top:210.00px;font-size:15px;line-height:15px;color:#7c828f;letter-spacing:1.087px;-webkit-text-stroke:0.3px;">Наименование</div>
<div class="t" style="left:1150.40px;top:240.50px;font-size:16.5px;line-height:17px;color:#484848;letter-spacing:-0.103px;">Создан</div>
<div class="t" style="left:1149.40px;top:275.50px;font-size:16.5px;line-height:17px;color:#484848;letter-spacing:0.668px;">Проверен</div>
<div class="t" style="left:1149.40px;top:310.50px;font-size:16.5px;line-height:17px;color:#484848;letter-spacing:0.349px;">Принят к учету</div>
<div class="t" style="left:1150.40px;top:345.50px;font-size:16.5px;line-height:17px;color:#484848;">Отправлен в 1С</div>
<div class="a" style="left:830px;top:158px;width:158px;height:44px;border:5px solid #e33a2f;border-radius:8px"></div>
<div class="a" style="left:1138px;top:161px;width:156px;height:216px;border:5px solid #e33a2f;border-radius:8px"></div>

</body>
</html>
